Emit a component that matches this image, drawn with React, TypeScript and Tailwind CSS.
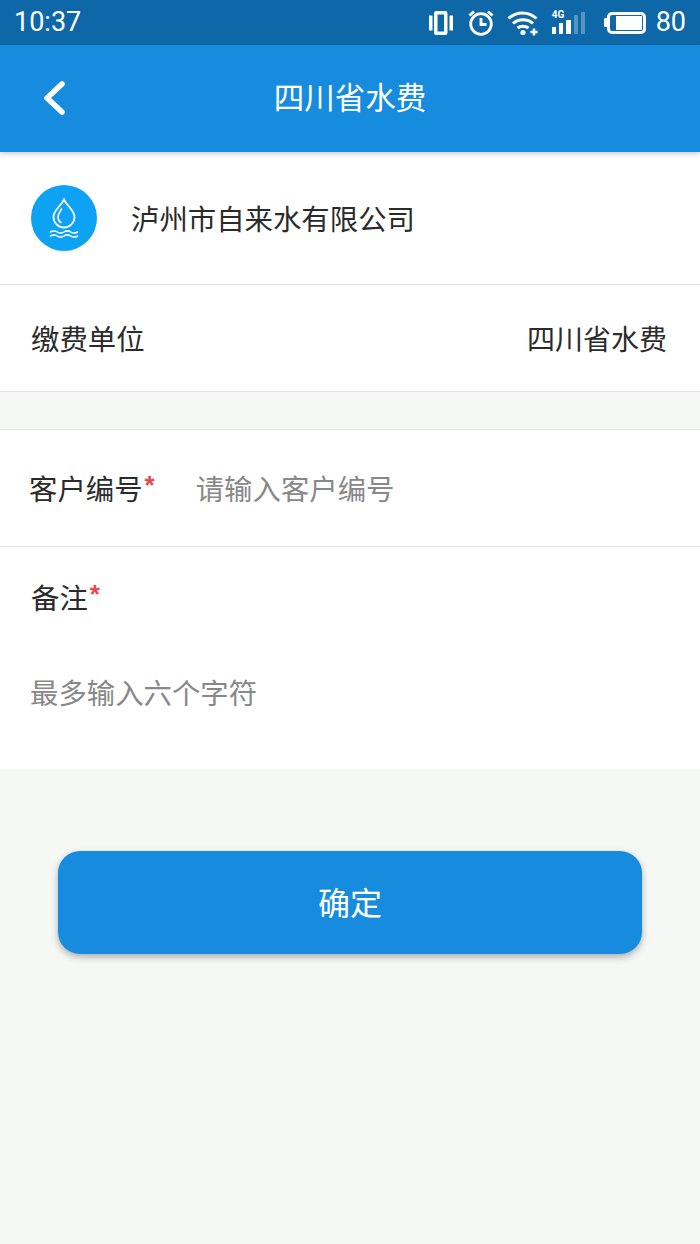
const font = { fontFamily: '"Noto Sans CJK SC", sans-serif' };
const roboto = { fontFamily: '"Roboto", sans-serif' };

function StatusIcons() {
  return (
    <div className="flex items-center text-white">
      <svg width="24" height="24" viewBox="0 0 24 24" fill="none" stroke="white" className="mr-[14px]">
        <rect x="6.750" y="1.750" width="10" height="20.500" strokeWidth="3.500" rx="0.500" />
        <path d="M1.750 4.500v15M22.250 4.500v15" strokeWidth="3.500" />
      </svg>
      <svg width="28" height="28" viewBox="0 0 28 28" fill="none" stroke="white" strokeWidth="2.800" className="mr-[12px]">
        <circle cx="14" cy="15" r="10.300" />
        <path d="M14 9v6.500h5.500" />
        <path d="M2.500 6.500 7 2.500M25.500 6.500 21 2.500" strokeWidth="3" />
      </svg>
      <svg width="32" height="26" viewBox="0 0 32 26" fill="none" stroke="white" className="mr-[13px]">
        <path d="M1.500 8.500c8-7.500 20-7.500 28 0" strokeWidth="3" />
        <path d="M6 13.500c5.500-5 14.500-5 20 0" strokeWidth="3" />
        <path d="M10.500 18c3-2.500 8-2.500 11 0" strokeWidth="3" />
        <circle cx="16" cy="22.500" r="2.600" fill="white" stroke="none" />
        <path d="M23.500 22h7M27 18.500v7" strokeWidth="2.400" />
      </svg>
      <div className="relative mr-[17px] h-[23px] w-[35px]">
        <span className="absolute left-0 top-[-1px] text-[10px] font-bold leading-[10px]" style={roboto}>4G</span>
        <div className="absolute bottom-0 left-0 flex items-end gap-[3px]">
          <div className="h-[7px] w-[4px] bg-white" />
          <div className="h-[11px] w-[4px] bg-white" />
          <div className="h-[14px] w-[5px] bg-white" />
          <div className="h-[19px] w-[4px] bg-white/30" />
          <div className="h-[22px] w-[4px] bg-white/30" />
        </div>
      </div>
      <div className="mr-[10px] flex items-center">
        <div className="h-[9px] w-[3px] rounded-l-[1px] bg-white" />
        <div className="flex h-[22px] w-[39px] items-center justify-end rounded-[5px] border-[3px] border-white p-[1px]">
          <div className="h-full w-[26px] bg-white" />
        </div>
      </div>
      <span className="text-[27px] leading-none" style={roboto}>80</span>
    </div>
  );
}

function DropLogo() {
  return (
    <div className="flex h-[66px] w-[66px] items-center justify-center rounded-full bg-[#0ea2f5]">
      <svg width="30" height="40" viewBox="0 0 30 40" fill="none" stroke="white" strokeLinecap="round">
        <path d="M15 1.500c2.500 6 10.500 10.500 10.500 17.500a10.500 10.500 0 0 1-21 0c0-7 8-11.500 10.500-17.500Z" strokeWidth="1.800" />
        <path d="M12.500 11c-1.500 2.500-3.500 5-3.500 8 0 2.500 1 4.500 3 5.500" strokeWidth="1.600" />
        <path d="M1.500 34c2.500-1.500 4.500-1.500 6.750 0s4.500 1.500 6.750 0 4.500-1.500 6.750 0 4.250 1.500 6.750 0" strokeWidth="1.500" />
        <path d="M1.500 38c2.500-1.500 4.500-1.500 6.750 0s4.500 1.500 6.750 0 4.500-1.500 6.750 0 4.250 1.500 6.750 0" strokeWidth="1.500" />
      </svg>
    </div>
  );
}

function Required() {
  return (
    <span className="ml-[2px] mt-[-6px] text-[26px] font-bold leading-none text-[#e5484d]" style={{ fontFamily: '"Liberation Sans", sans-serif' }}>
      *
    </span>
  );
}

export default function App() {
  return (
    <div className="flex h-[1244px] w-[700px] flex-col overflow-hidden bg-[#f6f8f5]" style={font}>
      <div className="flex h-[45px] shrink-0 items-center justify-between bg-[#0e68a8] px-[14px]">
        <span className="text-[27px] leading-none text-white" style={roboto}>10:37</span>
        <StatusIcons />
      </div>

      <header className="relative z-10 flex h-[107px] shrink-0 items-center justify-center bg-[#178cde] pb-[4px] shadow-[0_2px_5px_rgba(0,0,0,0.2)]">
        <svg width="24" height="36" viewBox="0 0 24 36" fill="none" stroke="white" strokeWidth="5.500" strokeLinecap="round" strokeLinejoin="round" className="absolute left-[42px] top-[35px]">
          <path d="M20 4 5 18l15 14" />
        </svg>
        <h1 className="text-[30.500px] font-normal text-white">四川省水费</h1>
      </header>

      <div className="flex h-[133px] shrink-0 items-center gap-[34px] border-b border-[#e2e2e2] bg-white pl-[31px]">
        <DropLogo />
        <span className="text-[28.400px] text-[#2b2b2b]">泸州市自来水有限公司</span>
      </div>

      <div className="flex h-[107px] shrink-0 items-center justify-between border-b border-[#e2e2e2] bg-white pl-[31px] pr-[33px] text-[28.400px] text-[#2b2b2b]">
        <span>缴费单位</span>
        <span className="text-[28px]">四川省水费</span>
      </div>

      <div className="h-[37px] shrink-0" />

      <div className="flex h-[118px] shrink-0 items-center border-y border-[#e6e6e2] bg-white pl-[29px]">
        <span className="text-[28.400px] text-[#2b2b2b]">客户编号</span>
        <Required />
        <span className="ml-[41px] text-[28.400px] text-[#888888]">请输入客户编号</span>
      </div>

      <div className="flex h-[222px] shrink-0 flex-col bg-white pl-[30px]">
        <div className="mt-[28px] flex items-center leading-[44px]">
          <span className="ml-[1px] text-[28.400px] text-[#2b2b2b]">备注</span>
          <Required />
        </div>
        <span className="mt-[53px] text-[28.400px] leading-[40px] text-[#888888]">最多输入六个字符</span>
      </div>

      <div className="flex justify-center pt-[82px]">
        <button className="h-[103px] w-[584px] rounded-[22px] bg-[#178cde] pb-[4px] text-[32px] text-white shadow-[0_3px_7px_rgba(0,0,0,0.3)]">
          确定
        </button>
      </div>
    </div>
  );
}
